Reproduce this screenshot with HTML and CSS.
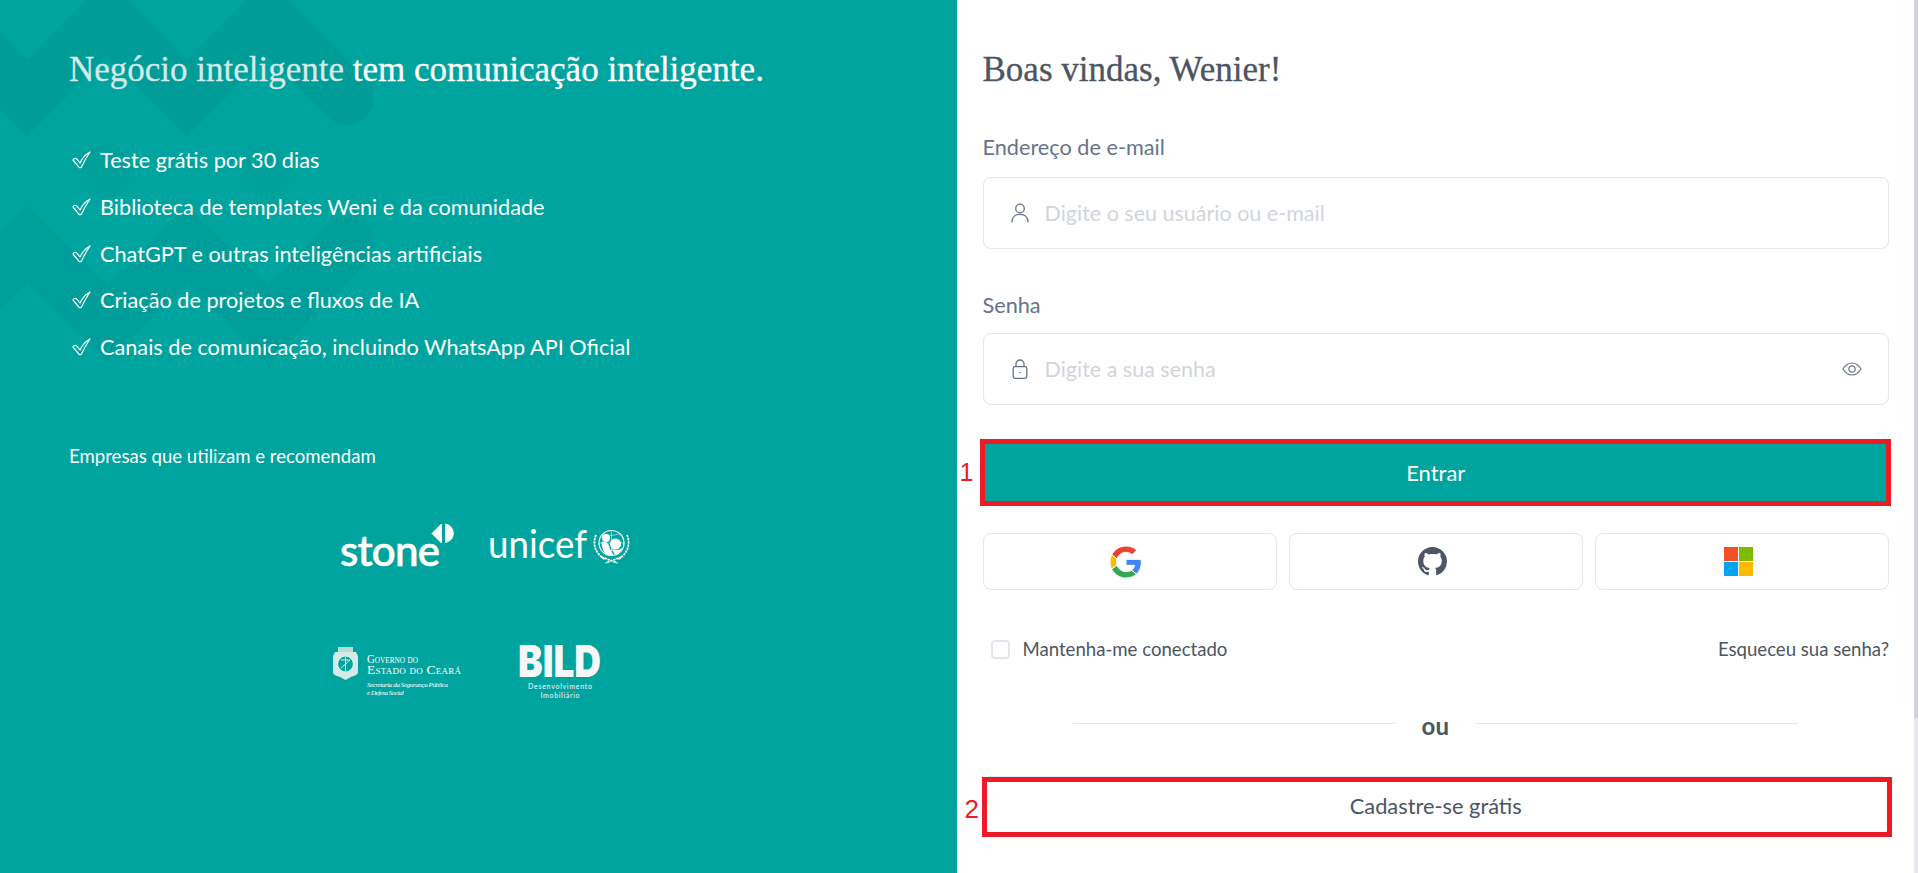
FILE: index.html
```html
<!DOCTYPE html>
<html lang="pt-BR">
<head>
    <meta charset="UTF-8">
    <meta name="viewport" content="width=device-width, initial-scale=1.0">
    <title>Weni - Entrar</title>
    <link rel="stylesheet" href="styles.css">
</head>
<body>
    <div class="page">
        <section class="promo">
            <svg class="promo-pattern" width="420" height="400" viewBox="0 0 420 400" fill="none" stroke-linecap="round" stroke-linejoin="miter">
                <polyline class="band-top" points="-53,18 27,98 107,18 187,98 267,18 347,98"/>
                <polyline class="band-bottom" points="-53,324 27,244 107,324 187,244 267,324 347,244"/>
                <circle class="dot" cx="107" cy="171" r="26"/>
                <circle class="dot" cx="267" cy="171" r="26"/>
            </svg>
            <div class="promo-content">
                <h1 class="promo-title"><span class="promo-title-dim">Negócio inteligente</span> tem comunicação inteligente.</h1>
                <ul class="benefits">
                    <li class="benefit">
                        <svg class="check" width="19" height="18" viewBox="0 0 19 18"><path d="M1 9C2 7 4 7 5.2 8.5L8 12C10 7.5 13.5 3.5 18 1C15 5.5 12 10.5 9.6 15.8C9 17 7.8 17 6.8 16Z"/></svg>
                        Teste grátis por 30 dias
                    </li>
                    <li class="benefit">
                        <svg class="check" width="19" height="18" viewBox="0 0 19 18"><path d="M1 9C2 7 4 7 5.2 8.5L8 12C10 7.5 13.5 3.5 18 1C15 5.5 12 10.5 9.6 15.8C9 17 7.8 17 6.8 16Z"/></svg>
                        Biblioteca de templates Weni e da comunidade
                    </li>
                    <li class="benefit">
                        <svg class="check" width="19" height="18" viewBox="0 0 19 18"><path d="M1 9C2 7 4 7 5.2 8.5L8 12C10 7.5 13.5 3.5 18 1C15 5.5 12 10.5 9.6 15.8C9 17 7.8 17 6.8 16Z"/></svg>
                        ChatGPT e outras inteligências artificiais
                    </li>
                    <li class="benefit">
                        <svg class="check" width="19" height="18" viewBox="0 0 19 18"><path d="M1 9C2 7 4 7 5.2 8.5L8 12C10 7.5 13.5 3.5 18 1C15 5.5 12 10.5 9.6 15.8C9 17 7.8 17 6.8 16Z"/></svg>
                        Criação de projetos e fluxos de IA
                    </li>
                    <li class="benefit">
                        <svg class="check" width="19" height="18" viewBox="0 0 19 18"><path d="M1 9C2 7 4 7 5.2 8.5L8 12C10 7.5 13.5 3.5 18 1C15 5.5 12 10.5 9.6 15.8C9 17 7.8 17 6.8 16Z"/></svg>
                        Canais de comunicação, incluindo WhatsApp API Oficial
                    </li>
                </ul>
                <p class="partners-title">Empresas que utilizam e recomendam</p>
                <div class="partners">
                    <!-- stone -->
                    <svg class="logo" width="116" height="54" viewBox="0 0 116 54" fill="#fff">
                        <text class="logo-stone" x="0" y="43" textLength="100">stone</text>
                        <path d="M92 10.500L101.500 1V20Z" stroke="#fff" stroke-width="1" stroke-linejoin="round"/>
                        <path d="M105 0.500A9.800 9.800 0 0 1 105 20Z"/>
                    </svg>
                    <!-- unicef -->
                    <svg class="logo" width="144" height="54" viewBox="0 0 144 54" fill="#fff">
                        <text class="logo-unicef" x="0" y="35" textLength="99" lengthAdjust="spacingAndGlyphs">unicef</text>
                        <g transform="translate(1.500 5)">
                            <g fill="none" stroke="#fff">
                                <circle cx="122" cy="15" r="12.500" stroke-width="1.200"/>
                                <path d="M122 2.500V27.500M110 15H134M114 6Q122 9 130 6M114 24Q122 21 130 24" stroke-width=".5"/>
                                <path d="M106.500 7C103 15 105 25 115 31M137.500 7C141 15 139 25 129 31M112 29L128 35M132 29L116 35" stroke-width="1.800" stroke-dasharray="2.400 .8"/>
                            </g>
                            <circle cx="116.500" cy="10" r="4"/>
                            <path d="M112 14C116 13 119 15 120 19C121 23 123 25 124 27H117C114 24 112 19 112 14Z"/>
                            <circle cx="126" cy="16" r="5.500"/>
                            <path d="M122 20C125 23 129 23 132 20C132 24 129 26 125 26Z"/>
                        </g>
                    </svg>
                    <!-- governo do ceara -->
                    <svg class="logo" width="130" height="56" viewBox="0 0 130 56" fill="#fff">
                        <path d="M2 7H23L25 11V27C25 30 21 31 18 32L12.500 35L7 32C4 31 0 30 0 27V11Z" fill="#d5e9e6"/>
                        <rect x="5" y="2" width="15" height="5" fill="#b9dcd8"/>
                        <circle cx="12.500" cy="19" r="8" fill="#00a49f" stroke="#e6f3f1" stroke-width="1.200"/>
                        <path d="M8 15H17M12.500 12V26M8 23L17 15" stroke="#d5e9e6" stroke-width="1" fill="none"/>
                        <text class="logo-gov" x="34" y="18" textLength="51" lengthAdjust="spacingAndGlyphs">Governo do</text>
                        <text class="logo-gov" x="34" y="29" textLength="94">Estado do Ceará</text>
                        <text class="logo-gov-sub" x="34" y="42" textLength="81">Secretaria da Segurança Pública</text>
                        <text class="logo-gov-sub" x="34" y="50" textLength="37">e Defesa Social</text>
                    </svg>
                    <!-- bild -->
                    <svg class="logo" width="84" height="56" viewBox="0 0 84 56" fill="#f7f7f7">
                        <text class="logo-bild" x="0" y="32" textLength="83" lengthAdjust="spacingAndGlyphs">BILD</text>
                        <text class="logo-bild-sub" x="42" y="44" textLength="64">Desenvolvimento</text>
                        <text class="logo-bild-sub" x="42" y="53" textLength="39">Imobiliário</text>
                    </svg>
                </div>
            </div>
        </section>

        <main class="login">
            <h2 class="login-title">Boas vindas, Wenier!</h2>
            <form class="login-form">
                <label class="field-label" for="email">Endereço de e-mail</label>
                <div class="field">
                    <svg class="field-icon" width="18" height="20" viewBox="0 0 18 20" fill="none" stroke="#67738b" stroke-width="1.300">
                        <circle cx="9" cy="5.500" r="4.300"/>
                        <path d="M1 19.300C1 14 4.500 11.300 9 11.300S17 14 17 19.300"/>
                    </svg>
                    <input class="field-input" type="text" id="email" placeholder="Digite o seu usuário ou e-mail">
                </div>
                <label class="field-label field-label-next" for="senha">Senha</label>
                <div class="field">
                    <svg class="field-icon" width="18" height="20" viewBox="0 0 18 20" fill="none" stroke="#67738b" stroke-width="1.300">
                        <rect x="2.200" y="7.700" width="13.600" height="11.600" rx="1.800"/>
                        <path d="M5 7.700V5A4 4 0 0 1 13 5V7.700"/>
                        <circle cx="9" cy="13.500" r=".8" fill="#67738b" stroke="none"/>
                    </svg>
                    <input class="field-input" type="password" id="senha" placeholder="Digite a sua senha">
                    <svg class="eye" width="20" height="14" viewBox="0 0 20 14" fill="none" stroke="#67738b" stroke-width="1.200">
                        <path d="M1 7C3.500 3 6.500 1 10 1S16.500 3 19 7C16.500 11 13.500 13 10 13S3.500 11 1 7Z"/>
                        <circle cx="10" cy="7" r="3.200"/>
                    </svg>
                </div>

                <div class="annotated annotated-enter">
                    <button class="btn-primary" type="button">Entrar</button>
                    <span class="note-box note-box-enter"></span>
                    <span class="note-number note-number-enter">1</span>
                </div>

                <div class="social">
                    <button class="social-btn" type="button" aria-label="Google">
                        <svg width="32" height="32" viewBox="0 0 48 48" stroke="#fff" stroke-width="1.500">
                            <path fill="#ea4335" d="M24 9.500c3.540 0 6.710 1.220 9.210 3.600l6.850-6.850C35.900 2.380 30.470 0 24 0 14.620 0 6.510 5.380 2.560 13.220l7.980 6.190C12.430 13.720 17.740 9.500 24 9.500z"/>
                            <path fill="#4285f4" d="M46.980 24.550c0-1.570-.15-3.090-.38-4.550H24v9.020h12.940c-.58 2.960-2.260 5.480-4.780 7.180l7.730 6c4.510-4.180 7.090-10.360 7.090-17.650z"/>
                            <path fill="#fbbc05" d="M10.530 28.590c-.48-1.450-.76-2.990-.76-4.590s.27-3.140.76-4.590l-7.980-6.190C.92 16.460 0 20.120 0 24c0 3.880.92 7.540 2.560 10.780l7.970-6.190z"/>
                            <path fill="#34a853" d="M24 48c6.480 0 11.930-2.130 15.890-5.810l-7.730-6c-2.150 1.450-4.920 2.300-8.160 2.300-6.260 0-11.570-4.220-13.470-9.910l-7.980 6.190C6.510 42.620 14.620 48 24 48z"/>
                        </svg>
                    </button>
                    <button class="social-btn" type="button" aria-label="GitHub">
                        <svg width="29" height="29" viewBox="0 0 16 16" fill="#4f5666">
                            <path d="M8 0C3.580 0 0 3.580 0 8c0 3.540 2.290 6.530 5.470 7.590.4.070.55-.17.55-.38 0-.19-.01-.82-.01-1.490-2.010.37-2.530-.49-2.690-.94-.09-.23-.48-.94-.82-1.130-.28-.15-.68-.52-.01-.53.63-.01 1.080.58 1.230.82.72 1.210 1.870.87 2.330.66.07-.52.28-.87.51-1.070-1.780-.2-3.640-.89-3.640-3.950 0-.87.31-1.590.82-2.150-.08-.2-.36-1.020.08-2.120 0 0 .67-.21 2.200.82.64-.18 1.320-.27 2-.27.68 0 1.360.09 2 .27 1.530-1.040 2.200-.82 2.200-.82.44 1.100.16 1.920.08 2.120.51.56.82 1.270.82 2.150 0 3.070-1.870 3.750-3.650 3.950.29.25.54.73.54 1.480 0 1.070-.01 1.930-.01 2.200 0 .21.15.46.55.38A8.013 8.013 0 0016 8c0-4.420-3.580-8-8-8z"/>
                        </svg>
                    </button>
                    <button class="social-btn" type="button" aria-label="Microsoft">
                        <svg width="29" height="29" viewBox="0 0 29 29">
                            <rect width="14" height="14" fill="#f25022"/>
                            <rect x="15" width="14" height="14" fill="#7fba00"/>
                            <rect y="15" width="14" height="14" fill="#00a4ef"/>
                            <rect x="15" y="15" width="14" height="14" fill="#ffb900"/>
                        </svg>
                    </button>
                </div>

                <div class="options">
                    <label class="remember"><span class="checkbox"></span>Mantenha-me conectado</label>
                    <a class="forgot" href="#">Esqueceu sua senha?</a>
                </div>

                <div class="divider"><span class="divider-line"></span><span class="divider-text">ou</span><span class="divider-line"></span></div>

                <div class="annotated">
                    <button class="btn-secondary" type="button">Cadastre-se grátis</button>
                    <span class="note-box note-box-signup"></span>
                    <span class="note-number note-number-signup">2</span>
                </div>
            </form>
        </main>

        <div class="scrollbar"><div class="scrollbar-thumb"></div></div>
    </div>
</body>
</html>
```

FILE: styles.css
```css
* {
    box-sizing: border-box;
}
html, body {
    height: 100%;
    margin: 0;
    overflow: hidden;
}
body {
    font-family: "Lato", sans-serif;
    background-color: #ffffff;
}
.page {
    display: flex;
    height: 873px;
}

/* left panel */
.promo {
    position: relative;
    width: 957px;
    padding: 50px 69px 0;
    background-color: #00a49f;
    color: #ffffff;
    overflow: hidden;
}
.promo-pattern {
    position: absolute;
    top: 0;
    left: 0;
}
.band-top {
    stroke: #000000;
    stroke-opacity: 0.045;
    stroke-width: 54;
}
.band-bottom {
    stroke: #000000;
    stroke-opacity: 0.03;
    stroke-width: 54;
}
.dot {
    fill: #000000;
    fill-opacity: 0.02;
}
.promo-content {
    position: relative;
}
.promo-title {
    margin: 0 0 55px;
    font-family: "Liberation Serif", serif;
    font-size: 35px;
    font-weight: 400;
    line-height: 40px;
    white-space: nowrap;
    -webkit-text-stroke: 0.3px currentColor;
}
.promo-title-dim {
    color: #d3eae8;
}
.benefits {
    display: flex;
    flex-direction: column;
    gap: 16.75px;
    margin: 0;
    padding: 0 0 0 3px;
    list-style: none;
}
.benefit {
    display: flex;
    align-items: center;
    gap: 9px;
    font-size: 21.7px;
    line-height: 30px;
}
.check {
    fill: none;
    stroke: #ffffff;
    stroke-width: 1.2;
    stroke-linejoin: round;
}
.partners-title {
    margin: 82px 0 55px;
    font-size: 18.6px;
    line-height: 24px;
}
.partners {
    display: grid;
    grid-template-columns: 162px 162px;
    justify-content: center;
    justify-items: center;
    align-items: start;
    row-gap: 68px;
}
.logo {
    overflow: visible;
}
.logo-stone {
    font-family: "Lato", sans-serif;
    font-size: 42px;
    font-weight: 500;
    stroke: #ffffff;
    stroke-width: 0.7;
}
.logo-unicef {
    font-family: "Lato", sans-serif;
    font-size: 39px;
    font-weight: 400;
}
.logo-gov {
    font-family: "Liberation Serif", serif;
    font-size: 13.5px;
    font-variant: small-caps;
}
.logo-gov-sub {
    font-family: "Liberation Serif", serif;
    font-size: 7px;
    font-style: italic;
}
.logo-bild {
    font-family: "Inter", sans-serif;
    font-size: 44px;
    font-weight: 900;
}
.logo-bild-sub {
    font-family: "Lato", sans-serif;
    font-size: 7px;
    text-anchor: middle;
}

/* right panel */
.login {
    flex: 1;
    padding: 50px 25px 0 25.5px;
    color: #3b414d;
}
.login-title {
    margin: 0 0 43px;
    font-family: "Liberation Serif", serif;
    font-size: 35px;
    font-weight: 400;
    line-height: 40px;
    color: #4b5563;
    -webkit-text-stroke: 0.3px currentColor;
}
.login-form {
    display: flex;
    flex-direction: column;
}
.field-label {
    margin-bottom: 16px;
    font-size: 21.7px;
    line-height: 28px;
    color: #67738b;
}
.field-label-next {
    margin-top: 42px;
    margin-bottom: 14px;
}
.field {
    display: flex;
    align-items: center;
    gap: 16px;
    height: 72px;
    padding: 0 26px 0 27px;
    border: 1px solid #e2e6ed;
    border-radius: 8px;
}
.field-input {
    flex: 1;
    border: none;
    outline: none;
    padding: 0;
    font-family: "Lato", sans-serif;
    font-size: 21.5px;
    color: #3b414d;
}
.field-input::placeholder {
    color: #d1d5db;
    opacity: 1;
}
.annotated {
    position: relative;
}
.annotated-enter {
    margin-top: 37px;
}
.btn-primary {
    display: block;
    width: 100%;
    height: 61px;
    border: none;
    background-color: #00a49f;
    color: #ffffff;
    font-family: "Lato", sans-serif;
    font-size: 22px;
}
.btn-secondary {
    display: block;
    width: 100%;
    height: 58px;
    border: 1px solid #e2e6ed;
    border-radius: 8px;
    background-color: #ffffff;
    color: #4b5563;
    font-family: "Lato", sans-serif;
    font-size: 21.8px;
}
.note-box {
    position: absolute;
    border: 5px solid #ed1c24;
}
.note-box-enter {
    top: -3px;
    right: -2px;
    bottom: -3px;
    left: -3px;
}
.note-box-signup {
    top: 1px;
    right: -3px;
    bottom: -3px;
    left: -1px;
}
.note-number {
    position: absolute;
    font-family: "Liberation Sans", sans-serif;
    color: #ed1c24;
}
.note-number-enter {
    top: 15px;
    left: -23px;
    font-size: 25px;
    line-height: 30px;
}
.note-number-signup {
    top: 18px;
    left: -18px;
    font-size: 26px;
    line-height: 30px;
}
.social {
    display: grid;
    grid-template-columns: repeat(3, 1fr);
    gap: 12px;
    margin-top: 30px;
}
.social-btn {
    display: flex;
    align-items: center;
    justify-content: center;
    height: 57px;
    padding: 0 7px 0 0;
    border: 1px solid #e2e6ed;
    border-radius: 8px;
    background-color: #ffffff;
}
.options {
    display: flex;
    align-items: center;
    justify-content: space-between;
    height: 24px;
    margin-top: 47px;
    font-size: 18.6px;
}
.remember {
    display: flex;
    align-items: center;
    gap: 13px;
    margin-left: 8px;
    color: #4b5563;
}
.checkbox {
    width: 19px;
    height: 19px;
    border: 2px solid #e2e6ed;
    border-radius: 4px;
}
.forgot {
    color: #4b5563;
    text-decoration: none;
}
.divider {
    display: flex;
    align-items: center;
    gap: 26px;
    height: 24px;
    margin: 53px 91px 38px 90px;
}
.divider-line {
    flex: 1;
    height: 1px;
    margin-bottom: 6px;
    background-color: #e2e6ed;
}
.divider-text {
    margin-bottom: 2px;
    font-size: 24px;
    font-weight: 700;
    color: #4b5563;
}

/* drawn scrollbar */
.scrollbar {
    width: 4px;
    background-color: #e5e7eb;
}
.scrollbar-thumb {
    height: 718px;
    background-color: #d1d5db;
}
```
